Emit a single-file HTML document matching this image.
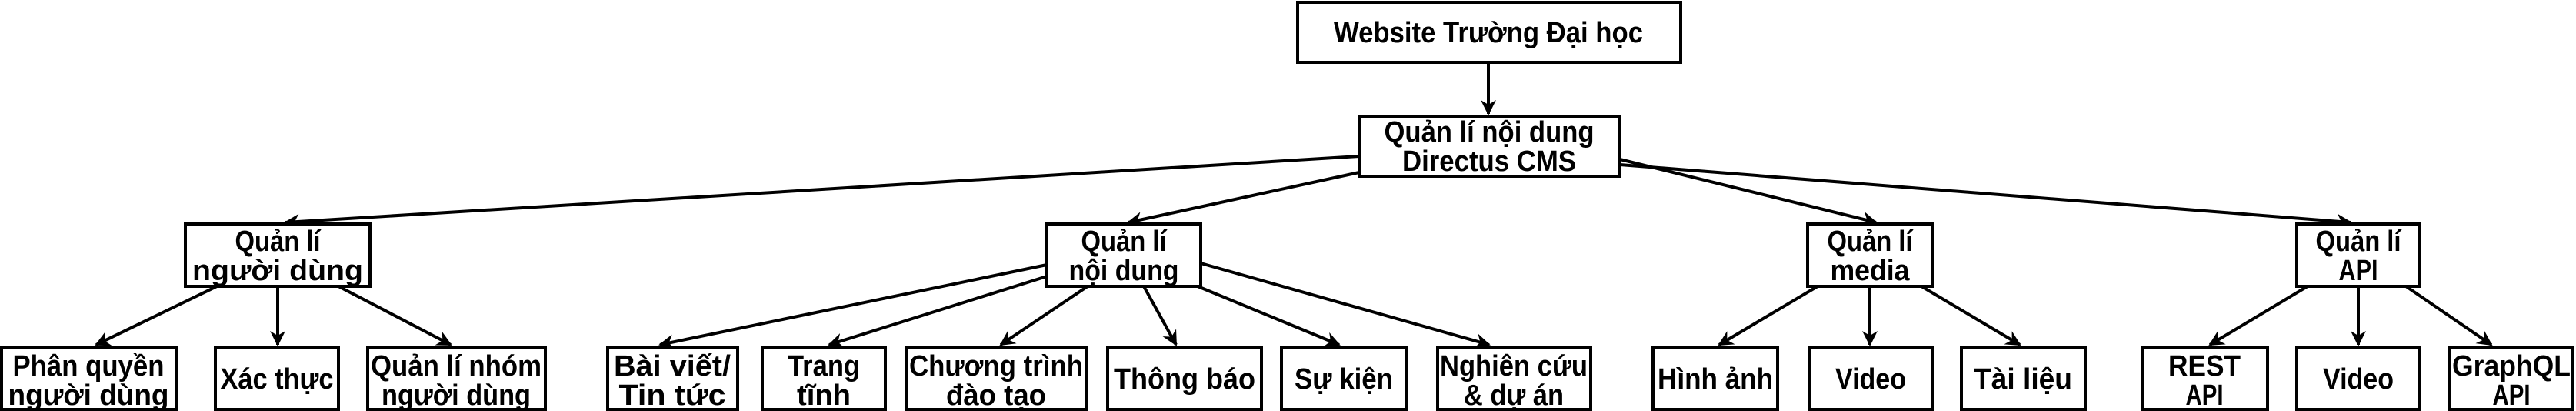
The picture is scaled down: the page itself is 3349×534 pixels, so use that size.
<!DOCTYPE html>
<html><head><meta charset="utf-8"><style>html,body{margin:0;padding:0;background:#fff}svg{display:block}</style></head><body>
<svg width="3349" height="534" viewBox="0 0 3349 534" xmlns="http://www.w3.org/2000/svg">
<defs>
<marker id="a" viewBox="0 0 10 10" refX="9" refY="5" markerWidth="5" markerHeight="5" markerUnits="strokeWidth" orient="auto">
<path d="M0,0 L10,5 L0,10 L3,5 Z" fill="#000"/>
</marker>
</defs>
<g stroke="#000" stroke-width="4" fill="none" marker-end="url(#a)">
<line x1="1935" y1="81" x2="1935" y2="148"/>
<line x1="1767" y1="203" x2="371" y2="289"/>
<line x1="1767" y1="224" x2="1467" y2="289"/>
<line x1="2106" y1="207" x2="2439" y2="289"/>
<line x1="2106" y1="214" x2="3056" y2="289"/>
<line x1="282" y1="372" x2="125" y2="448"/>
<line x1="361" y1="372" x2="361" y2="448"/>
<line x1="440" y1="372" x2="586" y2="448"/>
<line x1="1361" y1="344" x2="858" y2="448"/>
<line x1="1361" y1="359" x2="1078" y2="448"/>
<line x1="1414" y1="372" x2="1301" y2="448"/>
<line x1="1487" y1="372" x2="1529" y2="448"/>
<line x1="1557" y1="372" x2="1741" y2="448"/>
<line x1="1561" y1="342" x2="1936" y2="448"/>
<line x1="2363" y1="372" x2="2235" y2="448"/>
<line x1="2431" y1="372" x2="2431" y2="448"/>
<line x1="2498" y1="372" x2="2626" y2="448"/>
<line x1="3000" y1="372" x2="2873" y2="448"/>
<line x1="3066" y1="372" x2="3066" y2="448"/>
<line x1="3128" y1="372" x2="3239" y2="448"/>
</g>
<g stroke="#000" stroke-width="4" fill="#fff">
<rect x="1687" y="3" width="498" height="78"/>
<rect x="1767" y="151" width="339" height="78"/>
<rect x="241" y="291" width="240" height="81"/>
<rect x="1361" y="291" width="200" height="81"/>
<rect x="2350" y="291" width="162" height="81"/>
<rect x="2986" y="291" width="160" height="81"/>
<rect x="2" y="451" width="227" height="81"/>
<rect x="280" y="451" width="160" height="81"/>
<rect x="478" y="451" width="231" height="81"/>
<rect x="790" y="451" width="169" height="81"/>
<rect x="991" y="451" width="160" height="81"/>
<rect x="1179" y="451" width="233" height="81"/>
<rect x="1440" y="451" width="200" height="81"/>
<rect x="1666" y="451" width="162" height="81"/>
<rect x="1869" y="451" width="199" height="81"/>
<rect x="2149" y="451" width="162" height="81"/>
<rect x="2352" y="451" width="160" height="81"/>
<rect x="2550" y="451" width="161" height="81"/>
<rect x="2785" y="451" width="163" height="81"/>
<rect x="2986" y="451" width="160" height="81"/>
<rect x="3185" y="451" width="160" height="81"/>
</g>
<g font-family="Liberation Sans, Arial, sans-serif" font-weight="bold" font-size="38" text-anchor="middle" fill="#000">
<text x="1935" y="55" textLength="402" lengthAdjust="spacingAndGlyphs">Website Trường Đại học</text>
<text x="1936" y="184" textLength="273" lengthAdjust="spacingAndGlyphs">Quản lí nội dung</text>
<text x="1936" y="222" textLength="226" lengthAdjust="spacingAndGlyphs">Directus CMS</text>
<text x="361" y="326" textLength="111" lengthAdjust="spacingAndGlyphs">Quản lí</text>
<text x="361" y="364" textLength="222" lengthAdjust="spacingAndGlyphs">người dùng</text>
<text x="1461" y="326" textLength="111" lengthAdjust="spacingAndGlyphs">Quản lí</text>
<text x="1461" y="364" textLength="143" lengthAdjust="spacingAndGlyphs">nội dung</text>
<text x="2431" y="326" textLength="111" lengthAdjust="spacingAndGlyphs">Quản lí</text>
<text x="2431" y="364" textLength="103" lengthAdjust="spacingAndGlyphs">media</text>
<text x="3066" y="326" textLength="111" lengthAdjust="spacingAndGlyphs">Quản lí</text>
<text x="3066" y="364" textLength="51" lengthAdjust="spacingAndGlyphs">API</text>
<text x="115" y="488" textLength="197" lengthAdjust="spacingAndGlyphs">Phân quyền</text>
<text x="115" y="526" textLength="209" lengthAdjust="spacingAndGlyphs">người dùng</text>
<text x="360" y="505" textLength="147" lengthAdjust="spacingAndGlyphs">Xác thực</text>
<text x="593" y="488" textLength="222" lengthAdjust="spacingAndGlyphs">Quản lí nhóm</text>
<text x="593" y="526" textLength="194" lengthAdjust="spacingAndGlyphs">người dùng</text>
<text x="874" y="488" textLength="152" lengthAdjust="spacingAndGlyphs">Bài viết/</text>
<text x="874" y="526" textLength="139" lengthAdjust="spacingAndGlyphs">Tin tức</text>
<text x="1071" y="488" textLength="94" lengthAdjust="spacingAndGlyphs">Trang</text>
<text x="1071" y="526" textLength="70" lengthAdjust="spacingAndGlyphs">tĩnh</text>
<text x="1295" y="488" textLength="226" lengthAdjust="spacingAndGlyphs">Chương trình</text>
<text x="1295" y="526" textLength="130" lengthAdjust="spacingAndGlyphs">đào tạo</text>
<text x="1540" y="505" textLength="184" lengthAdjust="spacingAndGlyphs">Thông báo</text>
<text x="1747" y="505" textLength="128" lengthAdjust="spacingAndGlyphs">Sự kiện</text>
<text x="1968" y="488" textLength="192" lengthAdjust="spacingAndGlyphs">Nghiên cứu</text>
<text x="1968" y="526" textLength="130" lengthAdjust="spacingAndGlyphs">&amp; dự án</text>
<text x="2230" y="505" textLength="150" lengthAdjust="spacingAndGlyphs">Hình ảnh</text>
<text x="2432" y="505" textLength="92" lengthAdjust="spacingAndGlyphs">Video</text>
<text x="2630" y="505" textLength="128" lengthAdjust="spacingAndGlyphs">Tài liệu</text>
<text x="2866" y="488" textLength="94" lengthAdjust="spacingAndGlyphs">REST</text>
<text x="2866" y="526" textLength="49" lengthAdjust="spacingAndGlyphs">API</text>
<text x="3066" y="505" textLength="92" lengthAdjust="spacingAndGlyphs">Video</text>
<text x="3265" y="488" textLength="154" lengthAdjust="spacingAndGlyphs">GraphQL</text>
<text x="3265" y="526" textLength="49" lengthAdjust="spacingAndGlyphs">API</text>
</g>
</svg>
</body></html>
